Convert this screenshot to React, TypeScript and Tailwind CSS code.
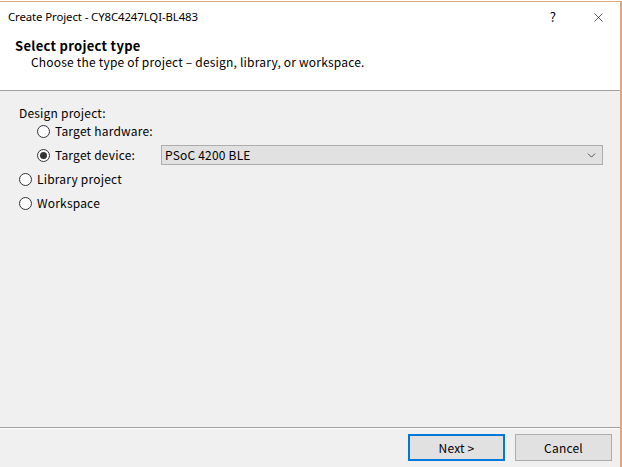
import { ChevronDown, X } from "lucide-react";

function Radio({ checked = false }: { checked?: boolean }) {
  return (
    <span className="flex h-[13px] w-[13px] items-center justify-center rounded-full border border-[#333] bg-white">
      {checked && <span className="h-[7px] w-[7px] rounded-full bg-[#333]" />}
    </span>
  );
}

function Option({ label, checked }: { label: string; checked?: boolean }) {
  return (
    <label className="flex h-[18px] items-center gap-[5px]">
      <Radio checked={checked} />
      <span>{label}</span>
    </label>
  );
}

function Button({ children, primary }: { children: string; primary?: boolean }) {
  return (
    <button
      className={
        "h-[27px] w-[97px] bg-[#e1e1e1] text-[12px] tracking-[0.2px] text-black " +
        (primary ? "border-2 border-[#0078d7]" : "border border-[#adadad]")
      }
    >
      {children}
    </button>
  );
}

export default function App() {
  const ui = { fontFamily: '"Noto Sans CJK KR", "Noto Sans", sans-serif' };
  return (
    <div className="h-[467px] w-[622px] bg-white pt-px" style={ui}>
      <div className="flex h-full flex-col border-t border-r-2 border-[#dea57f] bg-[#f0f0f0] text-[12px] tracking-[0.2px] text-black">
        <div className="flex h-[30px] items-center bg-white pl-2">
          <span
            className="flex-1 text-[11.4px] tracking-[-0.1px]"
            style={{ fontFamily: '"Noto Sans", sans-serif' }}
          >
            Create Project - CY8C4247LQI-BL483
          </span>
          <span className="w-[46px] text-center text-[13px]">?</span>
          <span className="flex w-[44px] justify-center">
            <X size={15} strokeWidth={1} />
          </span>
        </div>
        <div className="flex h-[58px] flex-col bg-white pl-[15px] pt-[6px] leading-[16px]">
          <span className="text-[13px] font-bold tracking-[0.3px]">Select project type</span>
          <span className="pl-4">Choose the type of project – design, library, or workspace.</span>
        </div>
        <div className="h-px bg-[#a0a0a0]" />
        <div className="flex flex-1 flex-col pl-[19px] pt-[13px]">
          <span className="flex h-[18px] items-center">Design project:</span>
          <div className="flex flex-col gap-[6px] pl-[18px]">
            <Option label="Target hardware:" />
            <div className="flex h-[18px] items-center pr-[17px]">
              <div className="w-[124px]">
                <Option label="Target device:" checked />
              </div>
              <div className="flex h-[20px] flex-1 items-center border border-[#adadad] bg-[#e1e1e1] pl-[3px] pr-[4px]">
                <span className="flex-1">PSoC 4200 BLE</span>
                <ChevronDown size={13} strokeWidth={1.5} className="text-[#333]" />
              </div>
            </div>
          </div>
          <div className="mt-[6px] flex flex-col gap-[6px]">
            <Option label="Library project" />
            <Option label="Workspace" />
          </div>
        </div>
        <div className="h-px bg-[#a0a0a0]" />
        <div className="h-px bg-white" />
        <div className="flex h-[38px] items-start justify-end gap-[10px] pr-[8px] pt-[5px]">
          <Button primary>Next &gt;</Button>
          <Button>Cancel</Button>
        </div>
      </div>
    </div>
  );
}
